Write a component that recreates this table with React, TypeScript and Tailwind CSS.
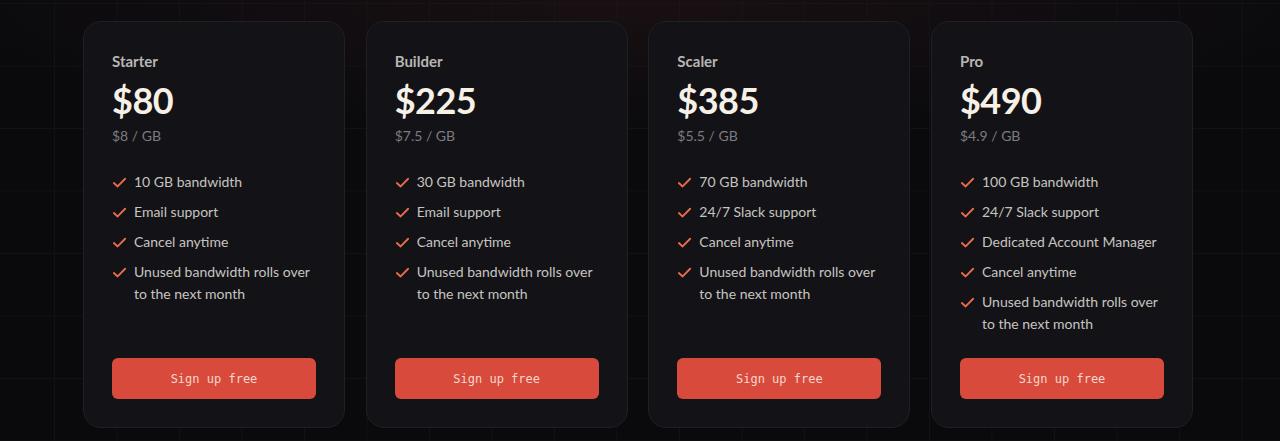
const plans = [
  {
    name: "Starter",
    price: "$80",
    perGb: "$8 / GB",
    features: ["10 GB bandwidth", "Email support", "Cancel anytime", "Unused bandwidth rolls over to the next month"],
  },
  {
    name: "Builder",
    price: "$225",
    perGb: "$7.5 / GB",
    features: ["30 GB bandwidth", "Email support", "Cancel anytime", "Unused bandwidth rolls over to the next month"],
  },
  {
    name: "Scaler",
    price: "$385",
    perGb: "$5.5 / GB",
    features: ["70 GB bandwidth", "24/7 Slack support", "Cancel anytime", "Unused bandwidth rolls over to the next month"],
  },
  {
    name: "Pro",
    price: "$490",
    perGb: "$4.9 / GB",
    features: [
      "100 GB bandwidth",
      "24/7 Slack support",
      "Dedicated Account Manager",
      "Cancel anytime",
      "Unused bandwidth rolls over to the next month",
    ],
  },
];

function CheckMark() {
  return (
    <svg viewBox="0 0 16 16" className="mt-[4px] h-[15px] w-[15px] shrink-0" fill="none">
      <path d="M2 8.6 L6 12.2 L14 4" stroke="#ea6a4c" strokeWidth="2" strokeLinecap="round" strokeLinejoin="round" />
    </svg>
  );
}

export default function App() {
  return (
    <div className="relative min-h-[441px] w-full overflow-hidden bg-[#0a0a0d] font-['Lato','Noto_Sans',sans-serif]">
      {/* grid + glow */}
      <div className="pointer-events-none absolute inset-0 bg-[linear-gradient(to_right,#111116_1px,transparent_1px),linear-gradient(to_bottom,#111116_1px,transparent_1px)] bg-[size:62.5px_62.5px] bg-[position:54px_3px]" />
      <div className="pointer-events-none absolute inset-0 bg-[radial-gradient(ellipse_55%_30%_at_50%_0%,rgba(40,22,24,0.5),transparent)]" />

      <div className="relative ml-[83px] grid w-[1110px] grid-cols-4 gap-[20.67px] pt-[21px]">
        {plans.map((plan) => (
          <div
            key={plan.name}
            className="flex h-[407px] flex-col rounded-[18px] border border-[#1f1f24] bg-[#131317] px-7 pb-7 pt-[27px]"
          >
            <h3 className="text-[15px] font-bold leading-6 text-[#b9b6b2]">{plan.name}</h3>
            <div className="mt-[7px] text-[36px] font-bold leading-10 tracking-[-0.5px] text-[#f6f0e6]">
              {plan.price}
            </div>
            <p className="mt-[6px] text-[14px] leading-5 text-[#7c7b80]">{plan.perGb}</p>
            <ul className="mt-[25px] flex flex-col gap-2">
              {plan.features.map((f) => (
                <li key={f} className="flex items-start gap-[7px] text-[14px] leading-[22px] text-[#c7c4c0]">
                  <CheckMark />
                  <span>{f}</span>
                </li>
              ))}
            </ul>
            <button className="mt-auto h-[41px] w-full shrink-0 rounded-md bg-[#d84b3c] font-['DejaVu_Sans_Mono',monospace] text-[12px] text-[#f7d6cd]">
              Sign up free
            </button>
          </div>
        ))}
      </div>
    </div>
  );
}
